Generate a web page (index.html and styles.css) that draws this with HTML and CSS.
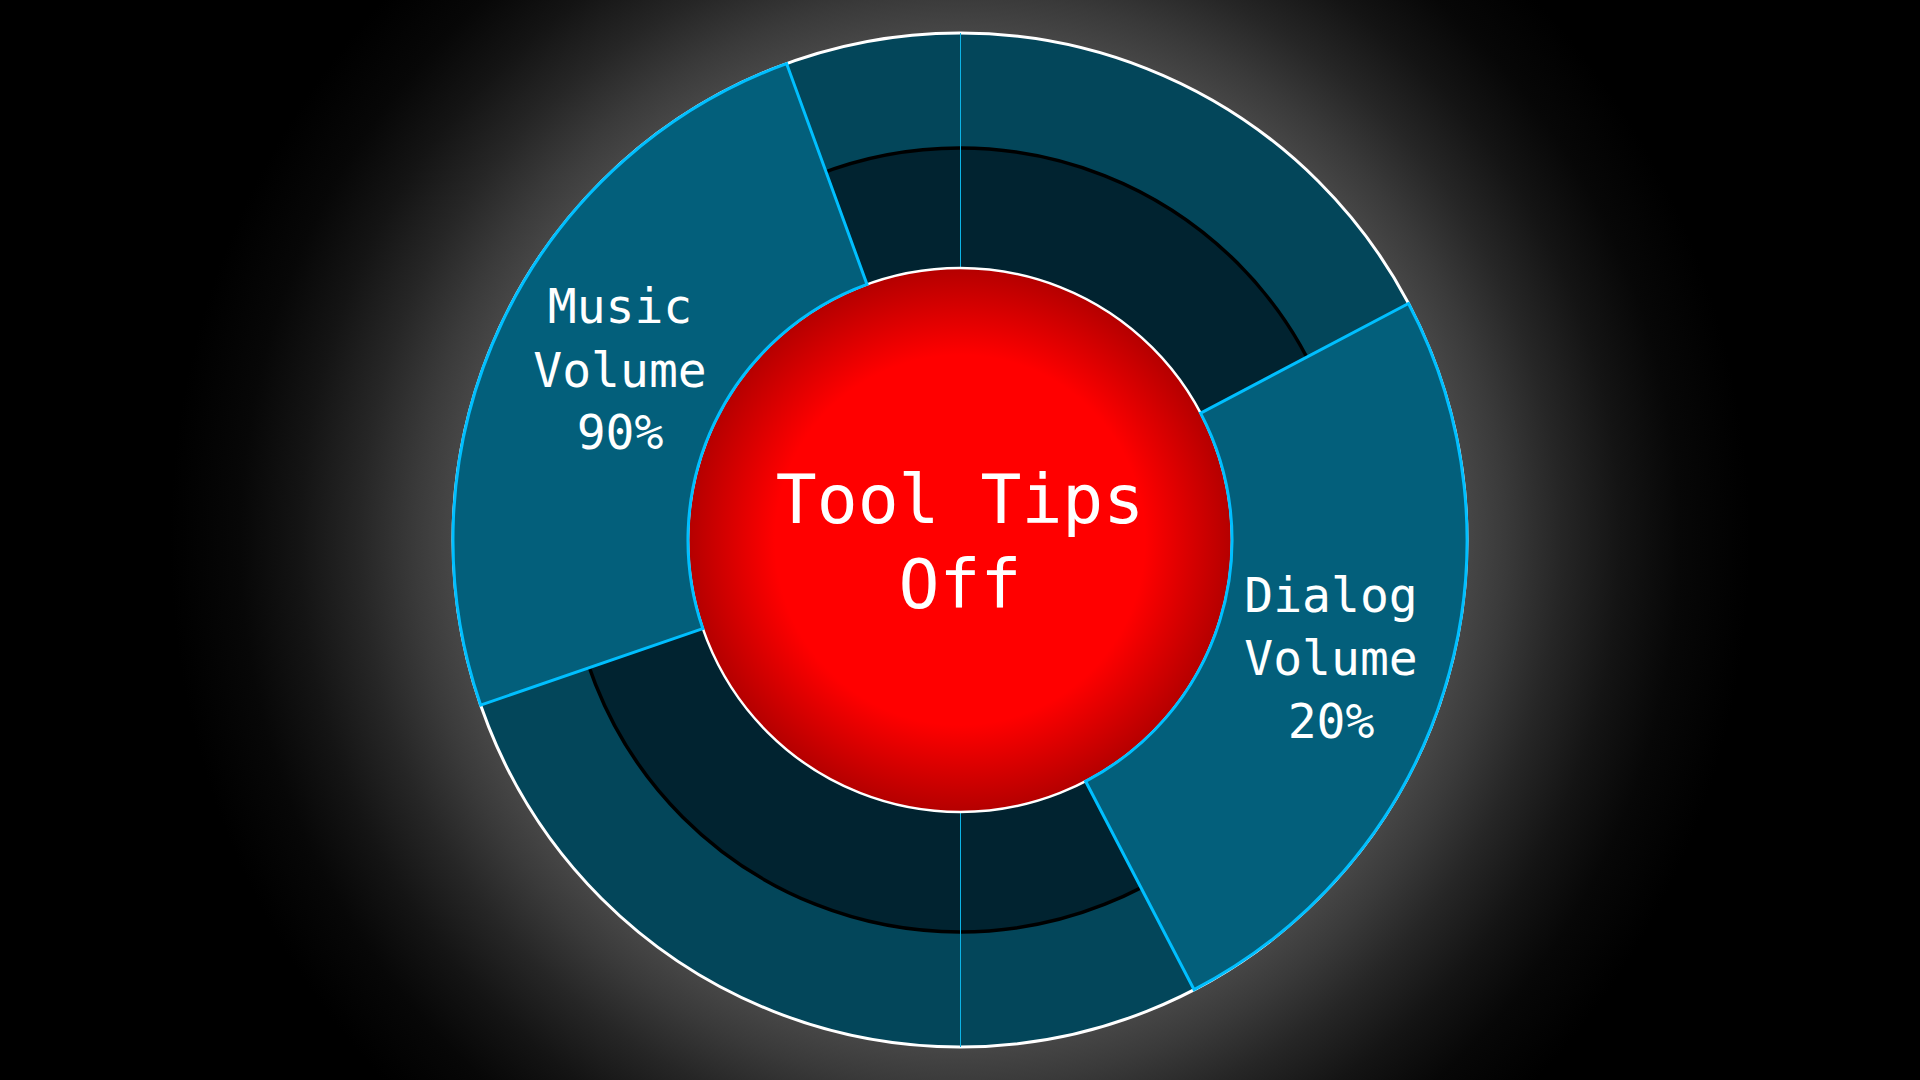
FILE: index.html
```html
<!DOCTYPE html>
<html lang="en">
<head>
<meta charset="utf-8">
<title>Radial Menu</title>
<link rel="stylesheet" href="styles.css">
</head>
<body>
<main class="stage">
  <svg class="wheel" width="1040" height="1080" viewBox="-520 -540 1040 1080" xmlns="http://www.w3.org/2000/svg">
    <defs>
      <radialGradient id="redGrad" cx="0" cy="0" r="272" gradientUnits="userSpaceOnUse">
        <stop offset="0" stop-color="#ff0000"/>
        <stop offset="0.68" stop-color="#ff0000"/>
        <stop offset="1" stop-color="#b40000"/>
      </radialGradient>
    </defs>
    <circle class="band-outer" cx="0" cy="0" r="507"/>
    <circle class="band-inner" cx="0" cy="0" r="392"/>
    <line class="divider" x1="0.5" y1="-507" x2="0.5" y2="507"/>
    <circle class="hub" cx="0" cy="0" r="272" fill="url(#redGrad)"/>
    <path class="segment" d="M -479.4 165.1 A 507 507 0 0 1 -173.4 -476.4 L -93.0 -255.6 A 272 272 0 0 0 -257.2 88.6 Z"/>
    <path class="segment" d="M 448.5 -236.5 A 507 507 0 0 1 234.1 449.7 L 125.6 241.3 A 272 272 0 0 0 240.6 -126.9 Z"/>
    <text class="label hub-label" x="0" y="-17" text-anchor="middle">Tool Tips</text>
    <text class="label hub-label" x="0" y="68" text-anchor="middle">Off</text>
    <text class="label seg-label" x="-340" y="-217" text-anchor="middle">Music</text>
    <text class="label seg-label" x="-340" y="-153" text-anchor="middle">Volume</text>
    <text class="label seg-label" x="-340" y="-91" text-anchor="middle">90%</text>
    <text class="label seg-label" x="371" y="72" text-anchor="middle">Dialog</text>
    <text class="label seg-label" x="371" y="135" text-anchor="middle">Volume</text>
    <text class="label seg-label" x="371" y="198" text-anchor="middle">20%</text>
  </svg>
</main>
</body>
</html>
```
FILE: styles.css
```css
html, body {
  margin: 0;
  padding: 0;
  width: 1920px;
  height: 1080px;
  overflow: hidden;
  background: #000;
}

.stage {
  width: 1920px;
  height: 1080px;
  display: flex;
  align-items: center;
  justify-content: center;
  background: radial-gradient(circle at 960px 540px,
    #4a4a4a 0px,
    #474747 505px,
    #3a3a3a 545px,
    #262626 600px,
    #141414 660px,
    #070707 720px,
    #000000 790px);
}

.wheel {
  display: block;
}

.band-outer {
  fill: #03465a;
  stroke: #ffffff;
  stroke-width: 3;
}

.band-inner {
  fill: #012330;
  stroke: #000000;
  stroke-width: 3.5;
}

.divider {
  stroke: #0cb4e6;
  stroke-width: 1;
}

.hub {
  stroke: #ffffff;
  stroke-width: 2.5;
}

.segment {
  fill: #035f7b;
  stroke: #00bfff;
  stroke-width: 3;
  stroke-linejoin: miter;
}

.label {
  fill: #ffffff;
  font-family: "DejaVu Sans Mono", "Liberation Mono", monospace;
}

.hub-label {
  font-size: 68px;
}

.seg-label {
  font-size: 48px;
}
```
